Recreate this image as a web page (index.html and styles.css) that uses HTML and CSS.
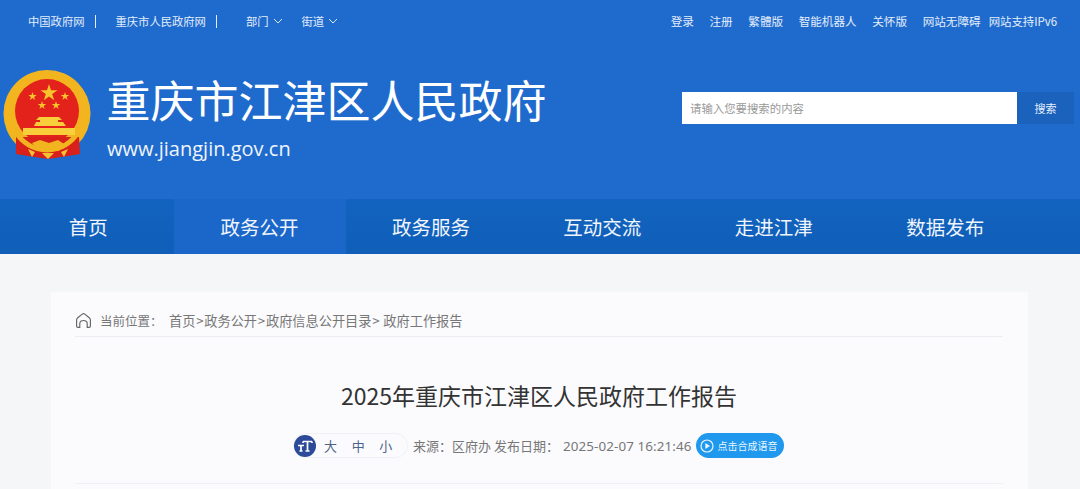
FILE: index.html
```html
<!DOCTYPE html>
<html lang="zh-CN">
<head>
<meta charset="utf-8">
<title>2025年重庆市江津区人民政府工作报告</title>
<link rel="stylesheet" href="styles.css">
</head>
<body>
<header class="header">
  <div class="topbar">
    <div class="top-left">
      <a class="top-link sep">中国政府网</a>
      <a class="top-link sep second">重庆市人民政府网</a>
      <a class="top-link drop">部门<svg class="chev" viewBox="0 0 10 6"><path d="M1 1l4 4 4-4"/></svg></a>
      <a class="top-link drop">街道<svg class="chev" viewBox="0 0 10 6"><path d="M1 1l4 4 4-4"/></svg></a>
    </div>
    <div class="top-right">
      <a class="tr-link">登录</a>
      <a class="tr-link">注册</a>
      <a class="tr-link">繁體版</a>
      <a class="tr-link">智能机器人</a>
      <a class="tr-link">关怀版</a>
      <a class="tr-link">网站无障碍</a>
      <a class="tr-link ipv6">网站支持IPv6</a>
    </div>
  </div>
  <div class="brand-row">
    <div class="brand">
      <svg class="emblem" viewBox="0 0 90 92">
        <circle cx="44" cy="43.500" r="43.500" fill="#f2b51f"/>
        <circle cx="44" cy="41" r="32" fill="#e3231b"/>
        <path fill="#d9211b" d="M13 67h63l1 17-12 2-20 3-20-3-12-2z"/>
        <path fill="none" stroke="#f2b51f" stroke-width="5" d="M11 60c9 14 21 20 33 20s24-6 33-20"/>
        <path fill="#f7c52b" d="M46 14l2 6.200h6.500l-5.300 3.800 2 6.200-5.200-3.800-5.200 3.800 2-6.200-5.300-3.800H44z"/>
        <path fill="#f7c52b" d="M29.500 22l1 3h3.200l-2.600 1.900 1 3-2.600-1.900-2.600 1.900 1-3-2.600-1.900h3.200zM62 22l1 3h3.200l-2.600 1.900 1 3-2.600-1.900-2.600 1.900 1-3-2.600-1.900h3.200zM39 31l1 3h3.200l-2.600 1.900 1 3-2.600-1.900-2.600 1.900 1-3-2.600-1.900h3.200zM53 31l1 3h3.200l-2.600 1.900 1 3-2.600-1.900-2.600 1.900 1-3-2.600-1.900h3.200z"/>
        <path fill="#f8ce3a" d="M36 47h20l3 3h-4v2h5l3 4H31l2-4h4v-2h-4zM20 58h52v7H20z"/>
        <path fill="#f2b51f" d="M29 73l8-3 9 3 9-3 6 4-5 7-10-2-10 2z"/>
        <path fill="#f4c235" d="M25 79l7 3-3 5zM39 83h12l-6 6zM58 82l7-3-4 8z"/>
      </svg>
      <div class="brand-text">
        <h1 class="site-name">重庆市江津区人民政府</h1>
        <div class="site-url">www.jiangjin.gov.cn</div>
      </div>
    </div>
    <form class="search">
      <div class="search-input">请输入您要搜索的内容</div>
      <div class="search-btn">搜索</div>
    </form>
  </div>
</header>
<nav class="nav">
  <a class="nav-item">首页</a>
  <a class="nav-item active">政务公开</a>
  <a class="nav-item">政务服务</a>
  <a class="nav-item">互动交流</a>
  <a class="nav-item">走进江津</a>
  <a class="nav-item">数据发布</a>
</nav>
<main class="card">
  <div class="crumbs">
    <svg class="home" viewBox="0 0 16 16"><path d="M4.500 14.500H2.800C2 14.500 1.500 14 1.500 13.200V7.500C1.500 6.700 1.800 6.200 2.300 5.700L6.800 2C7.500 1.400 8.500 1.400 9.200 2L13.700 5.700C14.200 6.200 14.500 6.700 14.500 7.500V13.200C14.500 14 14 14.500 13.200 14.500H11.500V11C11.500 9 10 8 8 8S4.500 9 4.500 11z"/></svg>
    <span class="crumb-label">当前位置：</span>
    <span class="crumb-path">首页<span class="gt">&gt;</span>政务公开<span class="gt">&gt;</span>政府信息公开目录<span class="gt">&gt;</span> 政府工作报告</span>
  </div>
  <h2 class="title">2025年重庆市江津区人民政府工作报告</h2>
  <div class="meta">
    <div class="sizes">
      <span class="size-icon">
        <svg viewBox="0 0 16 12"><path d="M6 1.500h9M6 1.500v1.500M15 1.500v1.500M10.500 1.500v9.500M8.500 11h4M1 5.500h6M4 5.500V11M2.500 11h3"/></svg>
      </span>
      <span class="size">大</span><span class="size">中</span><span class="size">小</span>
    </div>
    <span class="source">来源：区府办</span>
    <span class="date-label">发布日期：</span>
    <span class="date">2025-02-07 16:21:46</span>
    <a class="voice">
      <svg viewBox="0 0 14 14"><circle cx="7" cy="7" r="6"/><path class="play" d="M5.300 4L10 7l-4.700 3z"/></svg>
      点击合成语音
    </a>
  </div>
</main>
</body>
</html>
```
FILE: styles.css
```css
* { box-sizing: border-box; }
html, body { margin: 0; height: 489px; }
body {
  background: #f5f6f8;
  font-family: "Noto Sans CJK SC", "Noto Sans", sans-serif;
  color: #555;
}
a { color: inherit; text-decoration: none; }
.header { height: 199px; background: #1f6bcd; color: #fff; }
.topbar {
  display: flex; justify-content: space-between; align-items: center;
  height: 42px; padding: 0 23px 0 28px; font-size: 11.300px; color: #e4eefb;
}
.top-left, .top-right { display: flex; align-items: center; }
.top-link.sep { padding-right: 10px; margin-right: 20px; border-right: 1px solid #e4eefb; line-height: 13px; }
.top-link.second { margin-right: 29px; }
.top-link.drop { display: flex; align-items: center; gap: 4px; margin-right: 19px; }
.chev { width: 10px; height: 6px; fill: none; stroke: #dbe8fa; stroke-width: 1; }
.tr-link { margin-left: 15.600px; font-size: 11.600px; }
.tr-link.ipv6 { margin-left: 8px; font-size: 11.400px; }
.brand-row {
  display: flex; justify-content: space-between; align-items: flex-start;
  padding: 28px 6px 0 3px;
}
.brand { display: flex; align-items: flex-start; }
.emblem { width: 90px; height: 92px; flex: none; }
.brand-text { margin-left: 14px; color: #fff; }
.site-name { margin: 0 0 0 -.5px; font-size: 44px; line-height: 58px; font-weight: 400; }
.site-url { margin-top: 7px; font-size: 20px; line-height: 28px; font-family: "Open Sans", sans-serif; color: #eef4fd; }
.search { display: flex; margin-top: 22px; height: 32px; }
.search-input {
  width: 335px; padding-left: 8px; background: #fff; color: #999;
  font-size: 11.400px; line-height: 32px;
}
.search-btn {
  width: 57px; background: #1a62bb; color: #e6effb;
  font-size: 11px; line-height: 32px; text-align: center;
}
.nav {
  display: grid; grid-template-columns: repeat(6, 171.400px);
  height: 55px; padding-left: 3px;
  background: linear-gradient(#1263bf, #0f5fb9);
}
.nav-item { color: #f0f5fc; font-size: 19.500px; line-height: 55px; text-align: center; padding-right: 1px; }
.nav-item.active { background: #1b66c9; }
.card {
  margin: 38px 52px 0 51px; height: 197px; padding: 0 25px 0 24px;
  background: #fbfbfe;
}
.crumbs {
  display: flex; align-items: center; height: 45px;
  border-bottom: 1px solid #ecedf1; padding-top: 13px;
  font-size: 12.500px; color: #777;
}
.home { width: 17px; height: 17px; margin-right: 8px; fill: none; stroke: #666; stroke-width: 1.100; flex: none; }
.crumb-label { width: 69px; color: #777; }
.crumb-path { font-size: 13.200px; white-space: nowrap; }
.gt { padding: 0 .8px; }
.title {
  margin: 0; padding-top: 40px; text-align: center;
  font-size: 23px; line-height: 36px; font-weight: 400; color: #333;
}
.meta {
  display: flex; align-items: center; height: 52px; margin-top: 19px;
  padding: 0 0 24px 218px; font-size: 13px; color: #777;
  border-bottom: 1px solid #f0f1f4;
}
.sizes {
  display: flex; align-items: center; height: 25px; width: 115px;
  border: 1px solid #f0f1f6; border-radius: 13px; font-size: 13px; color: #4f6388;
}
.size-icon {
  display: flex; align-items: center; justify-content: center; flex: none;
  width: 22px; height: 22px; margin-right: 8px; border-radius: 50%; background: #2c4a97;
}
.size-icon svg { width: 16px; height: 12px; fill: none; stroke: #fff; stroke-width: 1.700; }
.size { width: 32px; }
.source { margin-left: 5px; }
.date-label { margin-left: 3px; width: 69px; }
.date { font-size: 13.400px; letter-spacing: .1px; font-family: "Noto Sans", sans-serif; white-space: nowrap; }
.voice {
  display: flex; align-items: center; gap: 3px; width: 88px; height: 25px; margin-left: 5px;
  padding-left: 4px; border-radius: 13px; background: #1f98ee; color: #eaf5fe; font-size: 10px; white-space: nowrap; flex: none;
}
.voice svg { width: 14px; height: 14px; flex: none; fill: none; stroke: #eaf5fe; stroke-width: 1.200; }
.voice .play { fill: #eaf5fe; stroke: none; }
```
